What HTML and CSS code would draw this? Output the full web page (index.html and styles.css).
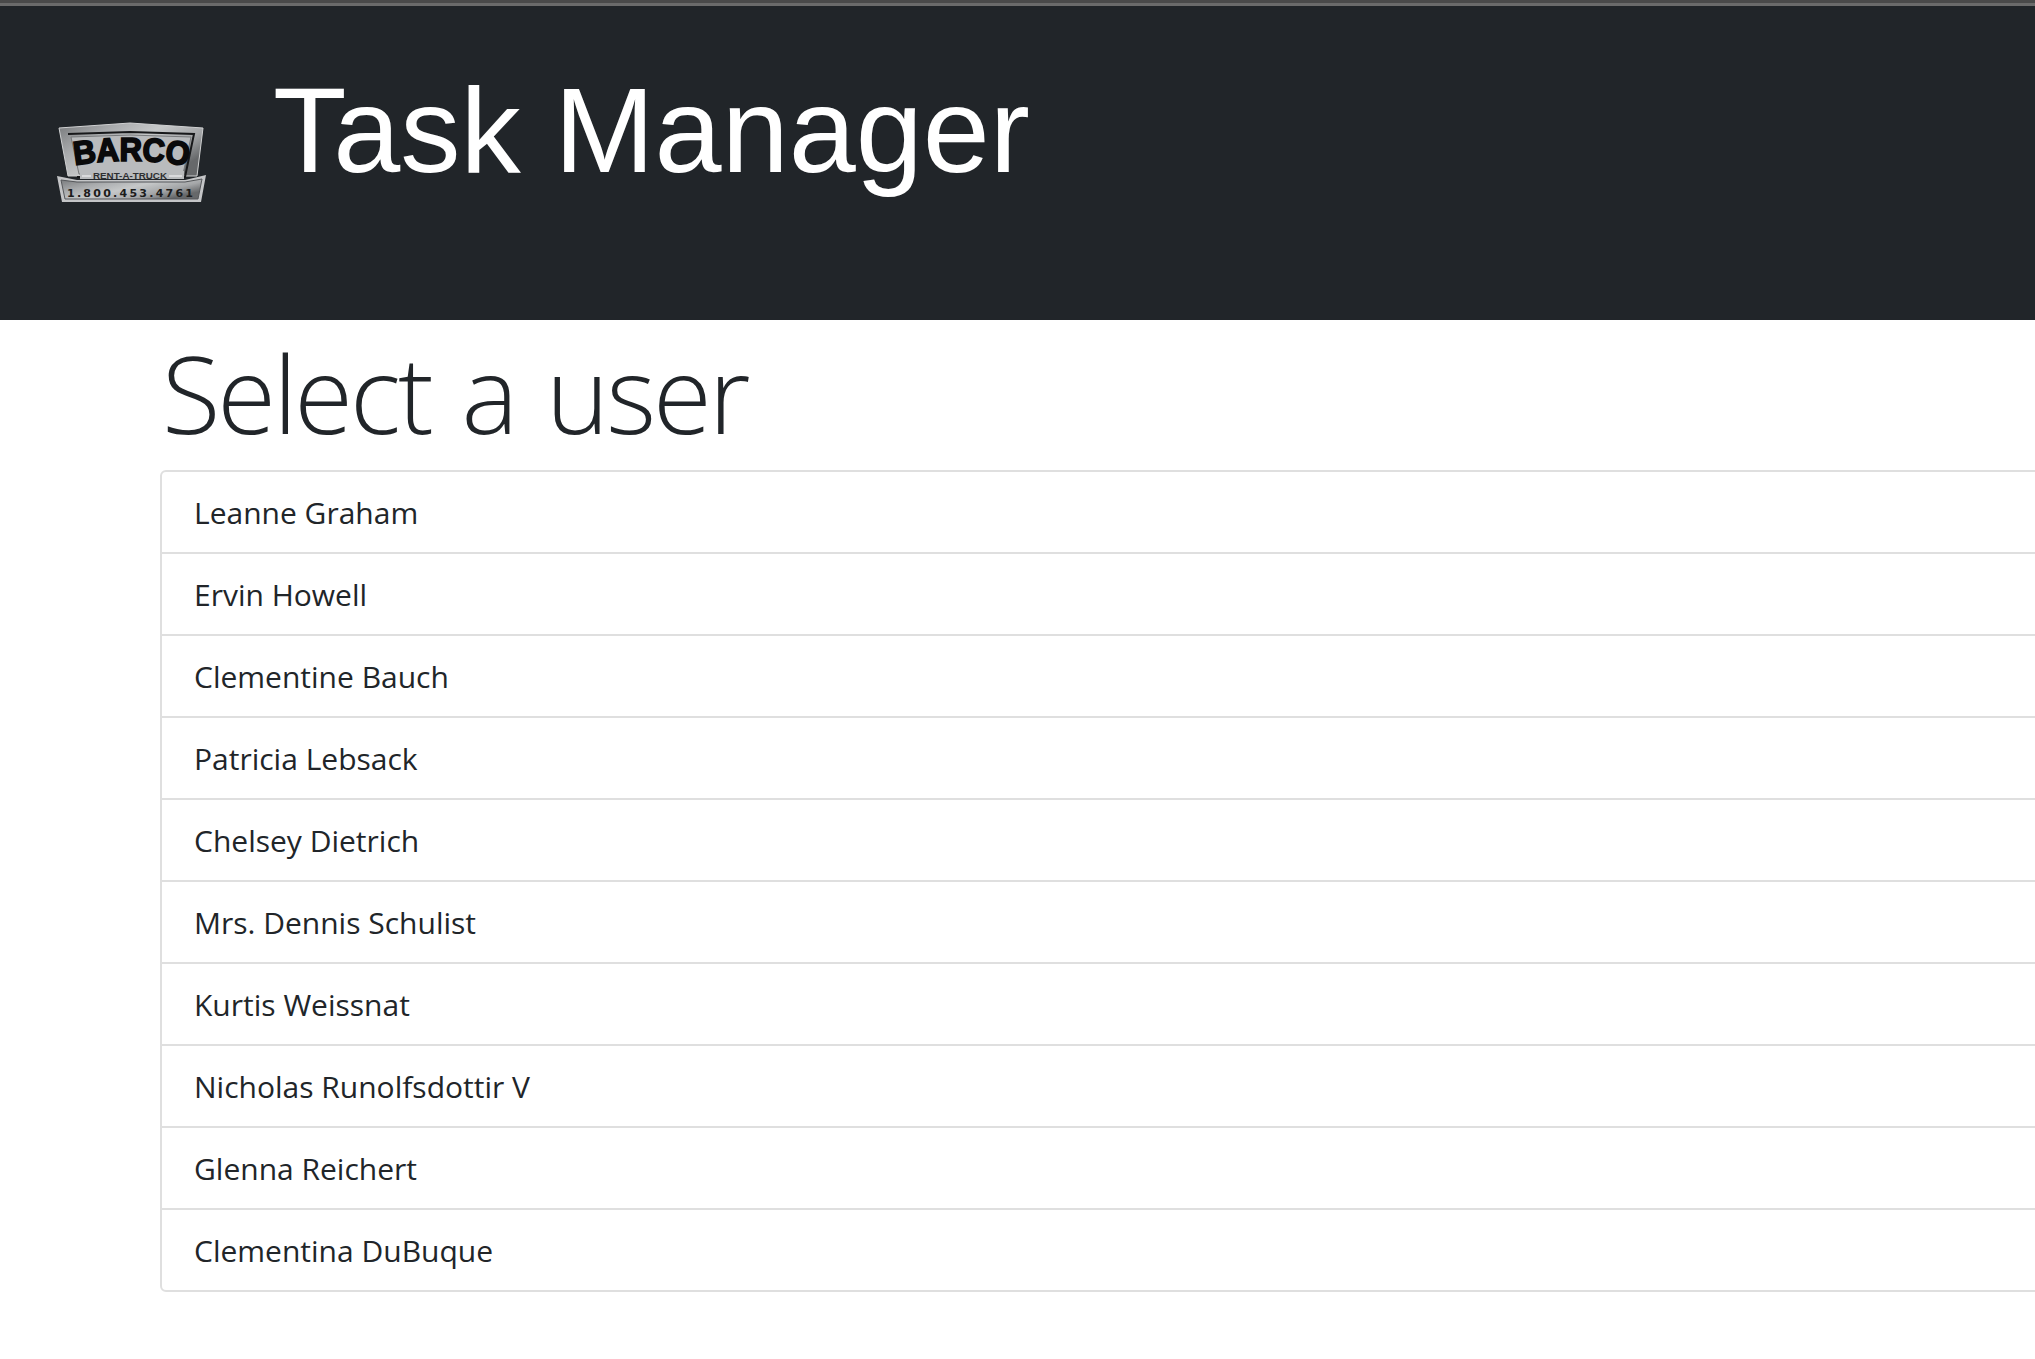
FILE: index.html
```html
<!DOCTYPE html>
<html lang="en">
<head>
    <meta charset="UTF-8">
    <meta name="viewport" content="width=device-width, initial-scale=1.0">
    <title>Task Manager</title>
    <link rel="stylesheet" href="styles.css">
</head>
<body>
    <div class="top-strip"></div>
    <header class="app-header">
        <svg class="logo" width="152" height="84" viewBox="0 0 152 84" role="img" aria-label="Barco Rent-A-Truck">
            <defs>
                <linearGradient id="plate" x1="0" y1="0" x2="1" y2="0.6">
                    <stop offset="0" stop-color="#77797b"/>
                    <stop offset="0.3" stop-color="#a9abad"/>
                    <stop offset="0.55" stop-color="#c6c8c9"/>
                    <stop offset="0.8" stop-color="#a4a6a8"/>
                    <stop offset="1" stop-color="#66686a"/>
                </linearGradient>
                <path id="name-arc" d="M14 44 Q74 33 137 45"/>
            </defs>
            <!-- upper badge -->
            <path d="M3 6 L74 1 L147 6 L141 54 L12 54 Z" fill="url(#plate)" stroke="#d0d1d2"/>
            <path d="M12 12 L74 10 L138 12 L129 55 L21 55" fill="none" stroke="#17181a" stroke-width="2"/>
            <path d="M15 15 L74 13 L135 15 L127 52 L23 52 Z" fill="#b9bbbd" stroke="#77797b"/>
            <text class="logo-name"><textPath href="#name-arc" startOffset="50%" text-anchor="middle" textLength="114" lengthAdjust="spacingAndGlyphs">BARCO</textPath></text>
            <rect class="logo-sub-bg" x="24" y="49" width="104" height="8"/>
            <path d="M26 54 H35 M113 54 H126" stroke="#e4e5e6" stroke-width="1.5"/>
            <text class="logo-sub" x="74" y="57" text-anchor="middle" textLength="74" lengthAdjust="spacingAndGlyphs">RENT-A-TRUCK</text>
            <!-- phone strip -->
            <path d="M1 54 L21 58 L129 58 L150 53 L145 80 L6 80 Z" fill="#c4c5c7"/>
            <path d="M5 58 L21 60 L129 60 L146 57 L142 77 L9 77 Z" fill="url(#plate)" stroke="#55575a"/>
            <text class="logo-phone" x="74" y="75" text-anchor="middle" textLength="126" lengthAdjust="spacing">1.800.453.4761</text>
        </svg>
        <h1 class="app-title">Task Manager</h1>
    </header>
    <main class="content">
        <h2 class="page-heading">Select a user</h2>
        <ul class="user-list">
            <li class="user-item">Leanne Graham</li>
            <li class="user-item">Ervin Howell</li>
            <li class="user-item">Clementine Bauch</li>
            <li class="user-item">Patricia Lebsack</li>
            <li class="user-item">Chelsey Dietrich</li>
            <li class="user-item">Mrs. Dennis Schulist</li>
            <li class="user-item">Kurtis Weissnat</li>
            <li class="user-item">Nicholas Runolfsdottir V</li>
            <li class="user-item">Glenna Reichert</li>
            <li class="user-item">Clementina DuBuque</li>
        </ul>
    </main>
</body>
</html>
```

FILE: styles.css
```css
html, body {
    margin: 0;
    padding: 0;
    background-color: #fff;
    overflow-x: hidden;
}

body {
    font-family: "Open Sans", "Noto Sans", sans-serif;
    color: #212529;
}

.top-strip {
    height: 3px;
    background-color: #4a4a4a;
    border-bottom: 3px solid #6b6b6b;
}

.app-header {
    display: flex;
    align-items: flex-start;
    height: 314px;
    padding-left: 56px;
    background-color: #212529;
}

.logo {
    flex-shrink: 0;
    margin-top: 116px;
}

.app-title {
    margin: 53px 0 0 65px;
    font-family: "Liberation Sans", Arial, sans-serif;
    font-size: 120.5px;
    font-weight: 400;
    line-height: 144px;
    color: #fff;
}

.logo-name {
    font-family: "Liberation Sans", Arial, sans-serif;
    font-size: 33px;
    font-weight: 700;
    fill: #0a0a0b;
    stroke: #0a0a0b;
    stroke-width: 1.8px;
}

.logo-sub-bg {
    fill: #b9bbbd;
}

.logo-sub {
    font-family: "Liberation Sans", Arial, sans-serif;
    font-size: 9px;
    font-weight: 700;
    fill: #2e2f31;
}

.logo-phone {
    font-family: "DejaVu Sans", sans-serif;
    font-size: 11px;
    font-weight: 700;
    fill: #1c1c1c;
}

.content {
    width: 2000px;
    padding-left: 160px;
}

.page-heading {
    height: 130px;
    margin: 0 0 20px;
    padding-left: 2px;
    font-size: 107px;
    font-weight: 300;
    line-height: 145px;
    letter-spacing: -3px;
    word-spacing: 6px;
    color: #212529;
}

.user-list {
    margin: 0;
    padding: 0;
    list-style: none;
    border: 2px solid #dfdfdf;
    border-radius: 6px;
}

.user-item {
    height: 79px;
    padding: 1px 0 0 32px;
    font-size: 30px;
    line-height: 79px;
    border-bottom: 2px solid #dfdfdf;
}

.user-item:last-child {
    border-bottom: 0;
}
```
